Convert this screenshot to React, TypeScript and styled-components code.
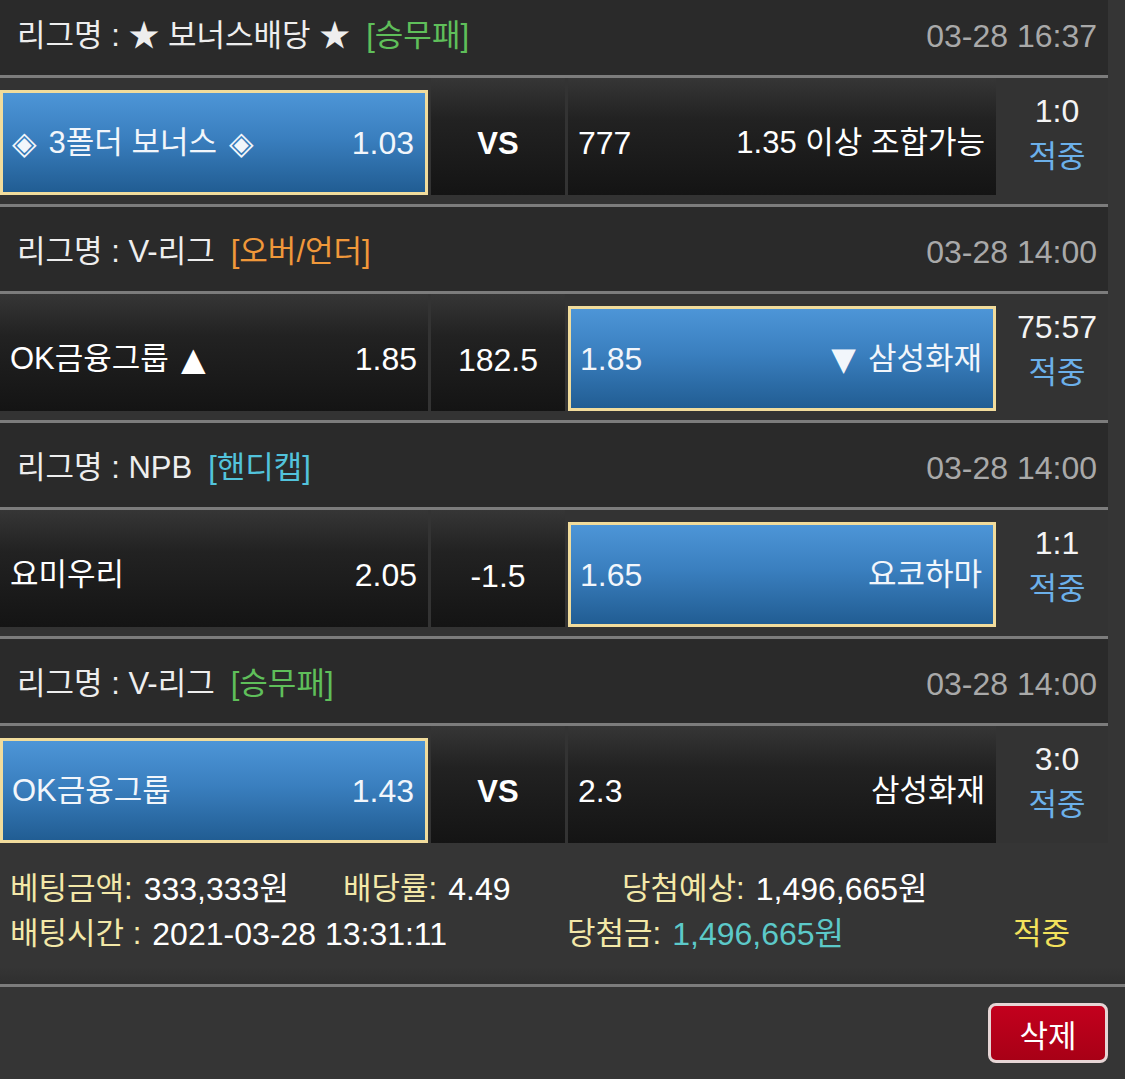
import React from 'react'
import styled, { createGlobalStyle } from 'styled-components'

const GlobalStyle = createGlobalStyle`
  html, body {
    margin: 0;
    padding: 0;
    background: #353535;
  }
  body {
    font-family: 'Liberation Sans', 'Noto Sans CJK KR', 'DejaVu Sans', sans-serif;
    color: #fff;
    overflow: hidden;
  }
`

type Side = {
  name: string
  odds: string
  picked?: boolean
  before?: string
  after?: string
}

type Match = {
  league: string
  tag: string
  tagColor: string
  time: string
  home: Side
  mid: string
  midBold?: boolean
  away: Side
  score: string
}

const matches: Match[] = [
  {
    league: '리그명 : ★ 보너스배당 ★',
    tag: '[승무패]',
    tagColor: '#5fbf5a',
    time: '03-28 16:37',
    home: { name: '3폴더 보너스', before: '◈', after: '◈', odds: '1.03', picked: true },
    mid: 'VS',
    midBold: true,
    away: { name: '1.35 이상 조합가능', odds: '777' },
    score: '1:0',
  },
  {
    league: '리그명 : V-리그',
    tag: '[오버/언더]',
    tagColor: '#f0983a',
    time: '03-28 14:00',
    home: { name: 'OK금융그룹', after: '▲', odds: '1.85' },
    mid: '182.5',
    away: { name: '삼성화재', before: '▼', odds: '1.85', picked: true },
    score: '75:57',
  },
  {
    league: '리그명 : NPB',
    tag: '[핸디캡]',
    tagColor: '#52c3dc',
    time: '03-28 14:00',
    home: { name: '요미우리', odds: '2.05' },
    mid: '-1.5',
    away: { name: '요코하마', odds: '1.65', picked: true },
    score: '1:1',
  },
  {
    league: '리그명 : V-리그',
    tag: '[승무패]',
    tagColor: '#5fbf5a',
    time: '03-28 14:00',
    home: { name: 'OK금융그룹', odds: '1.43', picked: true },
    mid: 'VS',
    midBold: true,
    away: { name: '삼성화재', odds: '2.3' },
    score: '3:0',
  },
]

const TeamName = ({ side }: { side: Side }) => (
  <Name>
    {side.before && <Mark $side="before">{side.before}</Mark>}
    {side.name}
    {side.after && <Mark $side="after">{side.after}</Mark>}
  </Name>
)

export default function App() {
  return (
    <>
      <GlobalStyle />
      <Page>
        <List>
          {matches.map((m, i) => (
            <React.Fragment key={i}>
              <Header>
                <League>
                  {m.league}
                  <Tag $color={m.tagColor}>{m.tag}</Tag>
                </League>
                <Time>{m.time}</Time>
              </Header>
              <Line />
              <Block $last={i === matches.length - 1}>
                <Cell $picked={m.home.picked}>
                  <TeamName side={m.home} />
                  <Odds>{m.home.odds}</Odds>
                </Cell>
                <MidCell $bold={m.midBold}>{m.mid}</MidCell>
                <Cell $picked={m.away.picked}>
                  <Odds>{m.away.odds}</Odds>
                  <TeamName side={m.away} />
                </Cell>
                <Result>
                  <Score>{m.score}</Score>
                  <Hit>적중</Hit>
                </Result>
              </Block>
              {i < matches.length - 1 && <Line />}
            </React.Fragment>
          ))}
        </List>

        <Summary>
          <SummaryRow>
            <Item $width={333}>
              <Label>베팅금액:</Label>
              <Value>333,333원</Value>
            </Item>
            <Item $width={279}>
              <Label>배당률:</Label>
              <Value>4.49</Value>
            </Item>
            <Item>
              <Label>당첨예상:</Label>
              <Value>1,496,665원</Value>
            </Item>
          </SummaryRow>
          <SummaryRow>
            <Item $width={557}>
              <Label>배팅시간 :</Label>
              <Value>2021-03-28 13:31:11</Value>
            </Item>
            <Item $width={446}>
              <Label>당첨금:</Label>
              <Value $color="#5cc9c9">1,496,665원</Value>
            </Item>
            <Item>
              <Label $color="#f3e25c">적중</Label>
            </Item>
          </SummaryRow>
        </Summary>
        <FullLine />
        <Footer>
          <DeleteButton>삭제</DeleteButton>
        </Footer>
      </Page>
    </>
  )
}

const Page = styled.div`
  width: 1125px;
  height: 1079px;
  overflow: hidden;
`

const List = styled.div`
  width: 1108px;
  margin-top: -9px;
`

const Header = styled.div`
  height: 84px;
  box-sizing: border-box;
  padding: 6px 11px 0 17px;
  display: flex;
  align-items: center;
  justify-content: space-between;
  background: #2a2a2a;
`

const League = styled.div`
  font-size: 31px;
  line-height: 36px;
  color: #eeeeee;
  white-space: nowrap;
`

const Tag = styled.span<{ $color: string }>`
  margin-left: 16px;
  color: ${(p) => p.$color};
`

const Time = styled.div`
  font-size: 32px;
  line-height: 36px;
  color: #a9a9a9;
`

const Line = styled.div`
  height: 3px;
  background: #7c7c7c;
`

const Block = styled.div<{ $last?: boolean }>`
  display: grid;
  grid-template-columns: 428px 134px 428px 109px;
  column-gap: 3px;
  height: 117px;
  padding-bottom: ${(p) => (p.$last ? '0' : '9px')};
  background: #333333;
`

const Cell = styled.div<{ $picked?: boolean }>`
  display: flex;
  align-items: center;
  justify-content: space-between;
  box-sizing: border-box;
  color: #ffffff;
  ${(p) =>
    p.$picked
      ? `
    margin-top: 12px;
    padding: 0 11px 0 9px;
    border: 3px solid #f1dc9c;
    background: linear-gradient(to bottom, #4d95d7 0%, #3a7fbf 45%, #215d93 100%);
    color: #f2f6fb;
  `
      : `
    padding: 12px 11px 0 10px;
    background: linear-gradient(to bottom, #363636 0%, #222222 35%, #141414 100%);
  `}
`

const Name = styled.span`
  display: inline-flex;
  align-items: center;
  font-size: 31px;
  line-height: 36px;
  white-space: nowrap;
`

const Mark = styled.span<{ $side: 'before' | 'after' }>`
  font-family: 'DejaVu Sans', sans-serif;
  font-size: 32px;
  line-height: 36px;
  ${(p) => (p.$side === 'before' ? 'margin-right: 12px;' : 'margin-left: 12px;')}
`

const Odds = styled.span`
  font-size: 32px;
  line-height: 36px;
`

const MidCell = styled.div<{ $bold?: boolean }>`
  display: flex;
  align-items: center;
  justify-content: center;
  padding-top: 14px;
  box-sizing: border-box;
  background: linear-gradient(to bottom, #363636 0%, #222222 35%, #141414 100%);
  font-size: ${(p) => (p.$bold ? '31px' : '32px')};
  line-height: 36px;
  font-weight: ${(p) => (p.$bold ? 700 : 400)};
`

const Result = styled.div`
  display: flex;
  flex-direction: column;
  align-items: center;
  justify-content: center;
  padding: 0 0 6px 7px;
`

const Score = styled.div`
  font-size: 32px;
  line-height: 46px;
  color: #f4f4f4;
`

const Hit = styled.div`
  font-size: 31px;
  line-height: 46px;
  color: #6cb0ea;
`

const Summary = styled.div`
  padding: 23px 10px 22px;
  height: 141px;
  box-sizing: border-box;
  background: linear-gradient(to bottom, #353535 0%, #353535 88%, #2f2f2f 100%);
`

const SummaryRow = styled.div`
  display: flex;
  align-items: center;
  height: 45px;
`

const Item = styled.div<{ $width?: number }>`
  ${(p) => (p.$width ? `width: ${p.$width}px;` : '')}
  flex-shrink: 0;
  display: flex;
  align-items: center;
  gap: 11px;
  white-space: nowrap;
  line-height: 36px;
`

const Label = styled.span<{ $color?: string }>`
  font-size: 31px;
  color: ${(p) => p.$color || '#f3e8a8'};
`

const Value = styled.span<{ $color?: string }>`
  font-size: 32px;
  color: ${(p) => p.$color || '#ffffff'};
`

const FullLine = styled.div`
  height: 3px;
  background: #7c7c7c;
`

const Footer = styled.div`
  display: flex;
  justify-content: flex-end;
  padding: 16px 17px 0 0;
`

const DeleteButton = styled.button`
  width: 120px;
  height: 60px;
  border: 3px solid #e6d5d5;
  border-radius: 8px;
  background: linear-gradient(to bottom, #c3001d 0%, #a80016 100%);
  color: #ffffff;
  font-family: 'Liberation Sans', 'Noto Sans CJK KR', sans-serif;
  font-size: 31px;
  padding: 0;
  cursor: pointer;
`
